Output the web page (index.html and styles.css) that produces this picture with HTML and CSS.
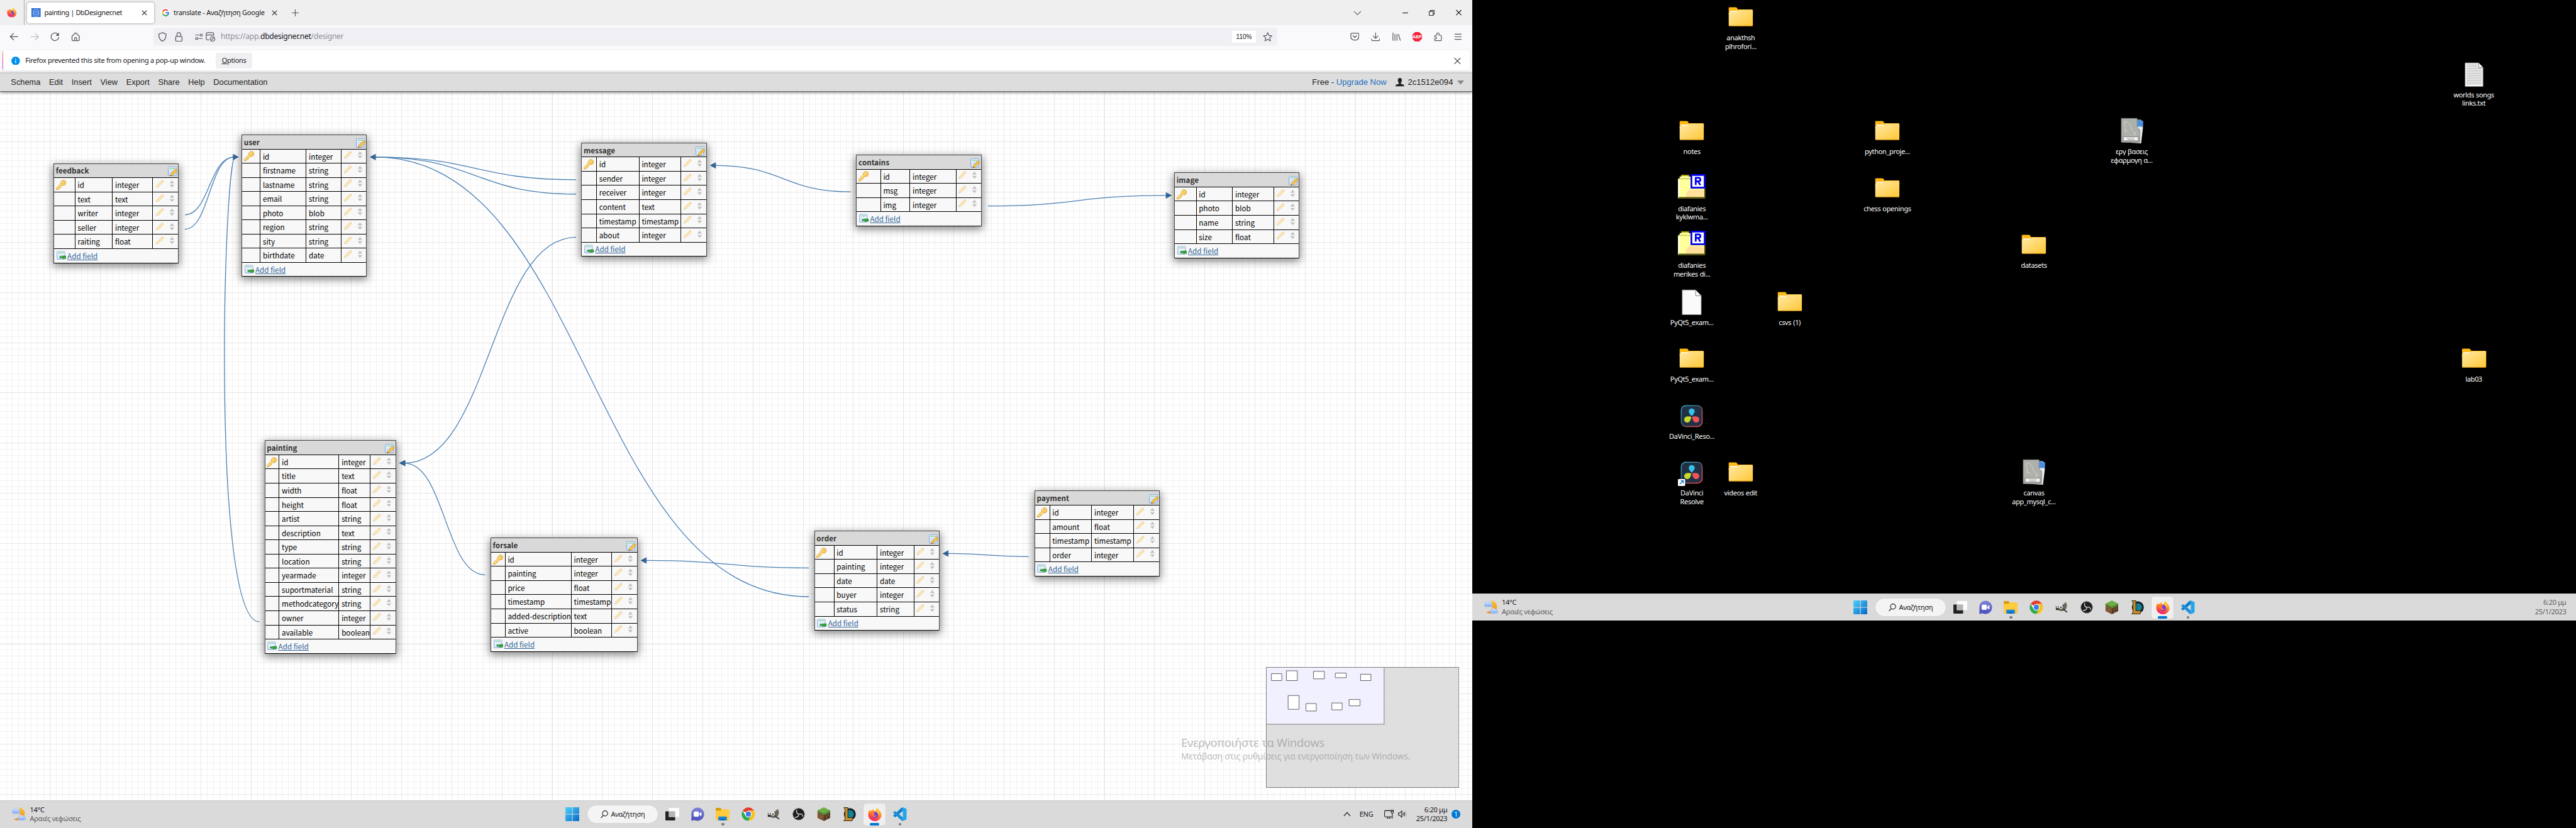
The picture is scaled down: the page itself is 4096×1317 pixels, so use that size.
FILE: index.html
```html
<!DOCTYPE html>
<html lang="el">
<head>
<meta charset="utf-8">
<title>painting | DbDesigner.net</title>
<link rel="stylesheet" href="styles.css">
</head>
<body>
<svg class="defs" width="0" height="0">
  <defs>
    <linearGradient id="gFolder" x1="0" y1="0" x2="1" y2="1"><stop offset="0" stop-color="#ffe9a6"/><stop offset="1" stop-color="#ffc734"/></linearGradient>
    <linearGradient id="gWin" x1="0" y1="0" x2="1" y2="1"><stop offset="0" stop-color="#4fd0fb"/><stop offset="1" stop-color="#0467c8"/></linearGradient>
    <linearGradient id="gFox" x1=".7" y1="0" x2=".3" y2="1"><stop offset="0" stop-color="#ffe14a"/><stop offset=".45" stop-color="#ff8a1f"/><stop offset=".8" stop-color="#ff3b47"/><stop offset="1" stop-color="#e31587"/></linearGradient>
    <linearGradient id="gChat" x1="0" y1="0" x2="0" y2="1"><stop offset="0" stop-color="#7f83d8"/><stop offset="1" stop-color="#4a4fbe"/></linearGradient>
    <linearGradient id="gMoon" x1="0" y1="0" x2="0" y2="1"><stop offset="0" stop-color="#ffc22e"/><stop offset="1" stop-color="#f08a16"/></linearGradient>
    <linearGradient id="gCloud" x1="0" y1="0" x2="0" y2="1"><stop offset="0" stop-color="#dbe9ff"/><stop offset="1" stop-color="#7faaf0"/></linearGradient>
    <linearGradient id="gDvEdge" x1="0" y1="0" x2="1" y2="1"><stop offset="0" stop-color="#2fb6d6"/><stop offset=".45" stop-color="#3a6d7c"/><stop offset=".6" stop-color="#a05a6a"/><stop offset="1" stop-color="#ff4b4b"/></linearGradient>
    <linearGradient id="gKey" x1="0" y1="0" x2="1" y2="1"><stop offset="0" stop-color="#fff3a0"/><stop offset="1" stop-color="#f5b92b"/></linearGradient>
    <linearGradient id="gSheet" x1="0" y1="0" x2="0" y2="1"><stop offset="0" stop-color="#e8f3fd"/><stop offset="1" stop-color="#b9d6f4"/></linearGradient>

    <symbol id="key" viewBox="0 0 18 18"><path d="M9.3 2.6 C10.8 .6 13.4 .2 15.2 1.4 C17.4 2.9 17.9 5.800 16.300 7.900 C15 9.600 12.600 10.100 10.800 9.200 L8.500 11.500 L8.300 13 L6.600 13.400 L6.400 14.900 L4.700 15.300 L3.600 17 L.8 17.200 L.7 14.500 L8.200 6.700 C7.900 5.200 8.300 3.900 9.300 2.600Z" fill="url(#gKey)" stroke="#dc9526" stroke-width="1"/><path d="M1.700 15.200 L8.800 7.900" stroke="#fff6c0" stroke-width="1"/><circle cx="13.200" cy="4.800" r="1.500" fill="#fff" stroke="#dc9526" stroke-width=".8"/></symbol>
    <symbol id="pencil" viewBox="0 0 14 14"><path d="M.6 13.400 L1.500 9.600 L9.900 1.200 Q11.200 .2 12.500 1.300 Q13.700 2.600 12.800 4 L4.400 12.300Z" fill="#fbdc8d" stroke="#edb95c" stroke-width=".9"/><path d="M9.900 1.200 Q11.200 .2 12.500 1.300 Q13.700 2.600 12.800 4Z" fill="#f4b79a"/><path d="M.5 13.500 L1.500 9.800 L4.300 12.400Z" fill="#f0d2ae"/><path d="M.5 13.500 L.9 12 L2 13Z" fill="#777"/></symbol>
    <symbol id="tools" viewBox="0 0 34 14"><g opacity=".62"><use href="#pencil" width="14" height="14"/></g><path d="M27.800 .8 L31.800 5.900 H23.800Z M27.800 13.500 L31.800 8.600 H23.800Z" fill="#c0c0c0"/></symbol>
    <symbol id="edit" viewBox="0 0 17 17"><rect x=".6" y=".6" width="14" height="15" rx=".8" fill="url(#gSheet)" stroke="#7fa8e0"/><path d="M2.500 3.400 H13" stroke="#8fce82" stroke-width="1.200"/><rect x="2.600" y="5.600" width="10.200" height="8.400" fill="#fff"/><path d="M2.600 7.600 H12.800 M2.600 9.800 H12.800 M2.600 12 H12.800 M5.200 5.600 V14 M7.800 5.600 V14 M10.400 5.600 V14" stroke="#a9cbea" stroke-width=".8"/><path d="M4.200 16.300 L5 12.600 L12.500 5 Q13.800 4.200 15 5.200 Q16.400 6.400 15.600 7.800 L8 15.400Z" fill="#fbc646" stroke="#b9741c" stroke-width=".8"/><path d="M4.200 16.300 L4.700 14.300 L6.200 15.800Z" fill="#444"/></symbol>
    <symbol id="addf" viewBox="0 0 17 15"><rect x=".6" y=".6" width="13.800" height="13.600" rx=".8" fill="url(#gSheet)" stroke="#8fb3e4"/><path d="M2.500 3 H12.500" stroke="#8fce82" stroke-width="1.200"/><rect x="2.400" y="5" width="10" height="7.400" fill="#f4f9ff"/><path d="M2.400 8.500 H12.400 M5 5 V12.400 M8 5 V12.400" stroke="#b7d1ee" stroke-width=".7"/><rect x="9" y="8.300" width="7.600" height="4.500" rx=".8" fill="#35a33c" stroke="#1f7f28" stroke-width=".6"/><path d="M4.200 10.500 L7.400 7.800 V9.700 H9 V11.400 H7.400 V13.200Z" fill="#2d8f36"/></symbol>

    <symbol id="x" viewBox="0 0 10 10"><path d="M1 1 L9 9 M9 1 L1 9" stroke="currentColor" stroke-width="1.100" fill="none"/></symbol>
    <symbol id="fox" viewBox="0 0 24 24"><path d="M12.500 24 C5 24 .6 18.600 .6 12.600 C.6 9 1.800 6.400 3.400 4.600 L4 7 C4.900 6 6 5.600 7.200 5.600 C7.800 4.200 8.800 3.300 9.800 2.800 C9.700 4.200 10.300 5.200 11.600 6.200 L13.800 6.800 C13.800 4 15 1.400 17 0 C17 2.600 18.600 4.200 20.600 6.200 C22.700 8.400 23.600 10.600 23.600 13.200 C23.600 19.400 18.800 24 12.500 24Z" fill="url(#gFox)"/><circle cx="12.500" cy="13.200" r="5.600" fill="#7b3be0"/><path d="M6.600 9.400 C8.600 8.600 11 9 12.600 10.400 C11.200 10.600 10.600 11.400 10.400 12.600 C10.800 14.600 13.400 15.400 15.400 14 C14.800 16.600 12 17.600 9.800 16.600 C7.400 15.400 6.300 12.400 6.600 9.400Z" fill="#ff7b2a"/><path d="M14 8 C17 9 18.600 11.500 18.200 14.600 C20 11.600 19 8.400 16.600 7Z" fill="#ffd23e"/></symbol>
    <symbol id="folder" viewBox="0 0 48 48"><path d="M3 8.500 Q3 7 4.500 7 H15 Q16.500 7 17.200 8 L19 11 H43.500 Q45 11 45 12.500 V20 H3Z" fill="#ffb914"/><path d="M3 17.500 Q3 15.500 5 15.500 L18 15 L20.500 11.800 H43.500 Q45 11.800 45 13.300 V38.500 Q45 40 43.500 40 H4.500 Q3 40 3 38.500Z" fill="url(#gFolder)"/><path d="M5 13 H19 L17 15.300 H5Z" fill="#fff" opacity=".85"/><path d="M3.600 39.500 H44.400" stroke="#e89f17" stroke-width="1"/></symbol>
    <symbol id="rfolder" viewBox="0 0 48 48"><path d="M0 8 H3 V4 H6 V1 H19 V4 H22 V8 H47 V42 H0Z" fill="#ffff9c"/><path d="M6 1 H19 V3 H6Z" fill="#9a9a00"/><path d="M1 7 H47 V9 H1Z" fill="#cccc66"/><path d="M1 9 H3 V40 H1Z" fill="#fff"/><path d="M19 27 H47 V40 H14 V33Z" fill="#ffcf9c" opacity=".75"/><path d="M16 29 H46 M15 33 H46 M15 37 H46" stroke="#ffff9c" stroke-width="1" stroke-dasharray="2 2"/><path d="M1 40 H46 V8 H48 V42 H1Z" fill="#4c4c00"/><rect x="22" y="0" width="26" height="25" fill="#0000f5"/><rect x="25" y="3" width="20" height="19" fill="#fff"/><path d="M31 19 V6.500 H36 Q39 6.500 39 9.500 Q39 12.500 36 12.500 H32 M35 12.500 L39 19" fill="none" stroke="#0000f5" stroke-width="3"/></symbol>
    <symbol id="file" viewBox="0 0 48 48"><path d="M7.500 3.500 H31 L40.500 13.500 V46.500 H7.500Z" fill="#fafafa" stroke="#8d8d8d"/><path d="M31 3.500 V13.500 H40.500Z" fill="#fff" stroke="#777"/></symbol>
    <symbol id="txt" viewBox="0 0 48 48"><path d="M8.500 4.500 H32 L39.500 12.500 V45.500 H8.500Z" fill="#f8f8f8" stroke="#8d8d8d"/><path d="M32 4.500 V12.500 H39.500" fill="#fff" stroke="#777"/><path d="M11 8 H30 M11 11 H30 M11 14 H37 M11 17 H37 M11 20 H37 M11 23 H37 M11 26 H37 M11 29 H37 M11 32 H37 M11 35 H37 M11 38 H37 M11 41 H37" stroke="#a2a2a2" stroke-width="1"/></symbol>
    <symbol id="sql" viewBox="0 0 48 48"><path d="M30 5 H39 L43 8 V20 L40 46 L8 44Z" fill="#e9ebea"/><path d="M33 5 H39.500 V7 H43.500 L43 17 H33Z" fill="#4a90e2"/><path d="M5.500 2.500 H33 V17 Q34 21 37.500 22 V44 H5.500Z" fill="#aeb0ab" stroke="#7e807b"/><path d="M11 8 C16 8 21 12 22 18 C23 24 27 26 31 29 L27 30 L30 33 M11 8 C10 14 14 17 12 26 L15 24 L18 27" fill="none" stroke="#d6d8d3" stroke-width="1"/><rect x="9" y="34.500" width="26" height="7" fill="#f4f4f4" stroke="#7e807b"/><path d="M15 37 H29 M16 39.500 H28" stroke="#aaa" stroke-width="1.200"/></symbol>
    <symbol id="davinci" viewBox="0 0 48 48"><rect x="5.800" y="6.800" width="36.400" height="36.400" rx="8" fill="#233044" stroke="url(#gDvEdge)" stroke-width="1.600"/><path d="M24 25 C20 21 18.800 18.500 18.800 16.500 A5.200 4.800 0 0 1 29.200 16.500 C29.200 18.500 28 21 24 25Z" fill="#35c3e8"/><path d="M23.200 26.200 C22.500 31.500 21 34 19 35.200 A5.200 5.200 0 0 1 13 26.700 C15.500 25.300 18.500 25 23.200 26.200Z" fill="#c6da2c"/><path d="M24.800 26.200 C25.500 31.500 27 34 29 35.200 A5.200 5.200 0 0 0 35 26.700 C32.500 25.300 29.500 25 24.800 26.200Z" fill="#f4545a"/></symbol>
    <symbol id="shortcut" viewBox="0 0 48 48"><use href="#davinci" width="48" height="48"/><rect x="0" y="36" width="12.500" height="12" rx="1" fill="#fff"/><path d="M3.200 45 L9 39.200 M5 39 H9.200 V43.500" fill="none" stroke="#0b6cc4" stroke-width="1.500"/></symbol>

    <symbol id="weather" viewBox="0 0 26 24"><path d="M13 0 C23 3 25 9 22.500 15 C19.500 22 11 25 4 20.500 C10 20 14 17 15 12 C15.500 8 15 4 13 0Z" fill="url(#gMoon)"/><path d="M3.500 11 A3.400 3.400 0 0 1 3.500 4.500 A4.200 4.200 0 0 1 11.500 4 A3.500 3.500 0 0 1 12 11Z" fill="url(#gCloud)" stroke="#8fb0ec" stroke-width=".5"/><path d="M13.500 22.500 A3.400 3.400 0 0 1 13.500 16 A4.200 4.200 0 0 1 21 15.500 A3.500 3.500 0 0 1 21.500 22.500Z" fill="url(#gCloud)" stroke="#8fb0ec" stroke-width=".5"/></symbol>
    <symbol id="win" viewBox="0 0 24 24"><path d="M0 0 H11.400 V11.400 H0Z M12.600 0 H24 V11.400 H12.600Z M0 12.600 H11.400 V24 H0Z M12.600 12.600 H24 V24 H12.600Z" fill="url(#gWin)"/></symbol>
    <symbol id="taskview" viewBox="0 0 24 24"><rect x="0" y="7" width="17" height="16" rx="1" fill="#222"/><rect x="6" y="1" width="18" height="16" rx="1" fill="#fff" opacity=".93"/><rect x="6" y="7" width="11" height="10" fill="#b5b5b5"/></symbol>
    <symbol id="chat" viewBox="0 0 24 24"><path d="M12.500 .5 A11.500 11.500 0 1 1 7 22.300 L1.500 23.500 V12 A11 11 0 0 1 12.500 .5Z" fill="url(#gChat)"/><rect x="5.500" y="7.500" width="9" height="9" rx="2" fill="#fff"/><path d="M15.500 10.500 L19 8.200 V15.800 L15.500 13.500Z" fill="#fff"/></symbol>
    <symbol id="explorer" viewBox="0 0 24 24"><path d="M0 2.500 Q0 1 1.500 1 H8 L10.500 3.500 H22.500 Q24 3.500 24 5 V22 Q24 23 23 23 H1 Q0 23 0 22Z" fill="#ffcb3d"/><path d="M0 2.500 Q0 1 1.500 1 H8 L10.500 3.500 L8 6 H0Z" fill="#d99a14"/><path d="M4.500 23 V17.500 Q4.500 16 6 16 H18 Q19.500 16 19.500 17.500 V23Z" fill="#1a84d8"/><path d="M8.500 23 V20.500 H15.500 V23Z" fill="#0b5cab"/></symbol>
    <symbol id="chrome" viewBox="0 0 24 24"><circle cx="12" cy="12" r="11.600" fill="#fff"/><path d="M12 12 L2 6.100 A11.600 11.600 0 0 1 22 6.100 H12Z" fill="#e33b2e"/><path d="M22 6.100 A11.600 11.600 0 0 1 12 23.600 L17 14.900 L12 6.100Z" fill="#fbc116"/><path d="M12 23.600 A11.600 11.600 0 0 1 2 6.100 L7 14.900 L12 17 L17 14.900Z" fill="#2da94f"/><circle cx="12" cy="12" r="5.700" fill="#fff"/><circle cx="12" cy="12" r="4.500" fill="#3b7ded"/></symbol>
    <symbol id="gimp" viewBox="0 0 24 24"><path d="M2 9 L4 10.500 L6 8 L9 10 Q14 9 19 3 L21 6 Q22 13 18 17 Q12 20 6 17 Q1 15 2 9Z" fill="#6b665b"/><circle cx="6" cy="11" r="2.600" fill="#fff"/><circle cx="11" cy="11.500" r="3" fill="#fff"/><circle cx="6.300" cy="11.200" r="1.200" fill="#111"/><circle cx="11" cy="11.700" r="1.400" fill="#111"/><ellipse cx="4.500" cy="15" rx="2.800" ry="1.700" fill="#222"/><path d="M14 15 L22 20.500" stroke="#3a3a3a" stroke-width="2"/></symbol>
    <symbol id="obs" viewBox="0 0 24 24"><circle cx="12" cy="12" r="10" fill="#1d1d1f" stroke="#4b4b4d"/><path d="M9 4.500 C7 8 9 11.500 12.300 12 M12.300 12 C16 10.500 19 12.500 19 16 M12.300 12 C12 16 9 18.500 5.500 17" fill="none" stroke="#c9c9cb" stroke-width="1.600"/></symbol>
    <symbol id="craft" viewBox="0 0 24 24"><path d="M12 0 L23 5.500 L12 11 L1 5.500Z" fill="#6fae45"/><path d="M1 5.500 L12 11 V24 L1 18.500Z" fill="#7a5233"/><path d="M23 5.500 L12 11 V24 L23 18.500Z" fill="#573923"/><path d="M1 5.500 L12 11 L23 5.500 V8.500 L20 10 V12 L17 11.500 L14 14 L12 13 L9 13.500 V11 L5 11 L4 9 L1 9Z" fill="#4f8a32"/><path d="M3 13 H5 M7 16 H9 M4 18 H6 M15 16 H17 M19 14 H21 M16 20 H18" stroke="#a87a50" stroke-width="1.400"/></symbol>
    <symbol id="lol" viewBox="0 0 24 24"><circle cx="13.500" cy="12" r="9.500" fill="#0b2b3a" stroke="#111" stroke-width="1.600"/><circle cx="13.500" cy="12" r="7" fill="#158396"/><path d="M3 .5 H10 V18 H19 L17.500 23.500 H3 L5 21 V3.500Z" fill="#c8902c" stroke="#20180a" stroke-width="1"/></symbol>
    <symbol id="vs" viewBox="0 0 24 24"><path d="M17 0 L23.500 3 V21 L17 24Z" fill="#23a5ee"/><path d="M17 0 V6.500 L3.500 17.500 L0 14.800 L14 1.500Z" fill="#0f80cc"/><path d="M17 24 V17.500 L3.500 6.500 L0 9.200 L14 22.500Z" fill="#1a8fdc"/></symbol>
  </defs>
</svg>

<div class="desk">
  <div class="monitor monitor--main">
    <header class="tabs">
      <div class="tabs__view"><svg width="17" height="17"><use href="#fox"/></svg></div>
      <div class="tab tab--active">
        <svg width="16" height="16" viewBox="0 0 16 16"><rect width="16" height="16" fill="#2f6fd0"/><g fill="none" stroke="#a9cbfa" stroke-width="1"><ellipse cx="8" cy="4" rx="4.800" ry="1.700"/><path d="M3.200 4 V12 C3.200 14.500 12.800 14.500 12.800 12 V4 M3.200 6.700 C3.200 9 12.800 9 12.800 6.700 M3.200 9.400 C3.200 11.700 12.800 11.700 12.800 9.400"/></g></svg>
        <span class="tab__title">painting | DbDesigner.net</span>
        <svg class="tab__close" width="10" height="10"><use href="#x"/></svg>
      </div>
      <div class="tab">
        <svg class="tab__google" width="16" height="16" viewBox="0 0 16 16"><circle cx="8" cy="8" r="8" fill="#fff"/><g fill="none" stroke-width="2.300"><path d="M11.800 4.300 A5.200 5.200 0 0 0 3.400 5.600" stroke="#ea4335"/><path d="M3.400 5.600 A5.200 5.200 0 0 0 3.400 10.400" stroke="#fbbc05"/><path d="M3.400 10.400 A5.200 5.200 0 0 0 11.500 11.900" stroke="#34a853"/><path d="M11.500 11.900 Q13.200 10.400 13.200 8.100 H8" stroke="#4285f4"/></g></svg>
        <span class="tab__title tab__title--g">translate - Αναζήτηση Google</span>
        <svg class="tab__close" width="10" height="10"><use href="#x"/></svg>
      </div>
      <svg class="tabs__new" width="12" height="12" viewBox="0 0 12 12"><path d="M6 0 V12 M0 6 H12" stroke="#555" stroke-width="1.200"/></svg>
      <div class="winctl">
        <svg class="winctl__list" width="14" height="10" viewBox="0 0 14 10"><path d="M1 2 L7 8 L13 2" fill="none" stroke="#666" stroke-width="1.300"/></svg>
        <svg width="10" height="10" viewBox="0 0 10 10"><path d="M0 5 H10" stroke="#000" stroke-width="1.100"/></svg>
        <svg width="10" height="10" viewBox="0 0 10 10"><path d="M.5 2.500 H7.500 V9.500 H.5Z M2.500 2.500 V.5 H9.500 V7.500 H7.500" fill="none" stroke="#000"/></svg>
        <svg width="12" height="11"><use href="#x"/></svg>
      </div>
    </header>

    <div class="nav">
      <div class="nav__btns">
        <svg width="16" height="16" viewBox="0 0 16 16"><path d="M15 8 H1.500 M7.500 2 L1.500 8 L7.500 14" fill="none" stroke="#56565f" stroke-width="1.400"/></svg>
        <svg width="16" height="16" viewBox="0 0 16 16"><path d="M1 8 H14.500 M8.500 2 L14.500 8 L8.500 14" fill="none" stroke="#bdbdc3" stroke-width="1.400"/></svg>
        <svg width="16" height="16" viewBox="0 0 16 16"><path d="M13.500 4.500 A6.600 6.600 0 1 0 14.600 8.500" fill="none" stroke="#56565f" stroke-width="1.400"/><path d="M15 .8 V6.500 H9.300Z" fill="#56565f"/></svg>
        <svg width="16" height="16" viewBox="0 0 16 16"><path d="M1.700 7.200 L8 1.200 L14.300 7.200 V13.500 Q14.300 15 12.800 15 H3.200 Q1.700 15 1.700 13.500Z M6.200 15 V10.800 Q6.200 9.500 8 9.500 Q9.800 9.500 9.800 10.800 V15" fill="none" stroke="#56565f" stroke-width="1.400"/></svg>
      </div>
      <div class="url">
        <svg width="16" height="17" viewBox="0 0 16 17"><path d="M8 1 L14.300 3.500 Q14.500 12.500 8 16 Q1.500 12.500 1.700 3.500Z" fill="none" stroke="#56565f" stroke-width="1.400"/></svg>
        <svg class="url__lock" width="14" height="17" viewBox="0 0 14 17"><rect x="1.500" y="7.500" width="11" height="8.500" rx="1.500" fill="none" stroke="#56565f" stroke-width="1.400"/><path d="M3.700 7.500 V4.500 Q3.700 1 7 1 Q10.300 1 10.300 4.500 V7.500" fill="none" stroke="#56565f" stroke-width="1.400"/></svg>
        <svg class="url__perm" width="14" height="12" viewBox="0 0 14 12"><g fill="none" stroke="#56565f" stroke-width="1.300"><path d="M.5 3 H8 M6 9 H13.500"/><circle cx="11" cy="3" r="1.900"/><circle cx="3" cy="9" r="1.900"/></g></svg>
        <svg width="17" height="17" viewBox="0 0 17 17"><g fill="none" stroke="#56565f" stroke-width="1.300"><path d="M6 13.500 H3 Q1 13.500 1 11.500 V3 Q1 1 3 1 H12 Q14 1 14 3 V6 M1 5 H14"/><circle cx="12" cy="12" r="4"/><path d="M9.300 14.700 L14.700 9.300"/></g></svg>
        <span class="url__text">https://app.<b>dbdesigner.net</b>/designer</span>
        <span class="url__zoom">110%</span>
        <svg width="17" height="17" viewBox="0 0 17 17"><path d="M8.500 1.200 L10.700 5.900 L15.900 6.500 L12 10 L13.100 15.300 L8.500 12.600 L3.900 15.300 L5 10 L1.100 6.500 L6.300 5.900Z" fill="none" stroke="#56565f" stroke-width="1.300"/></svg>
      </div>
      <div class="nav__ext">
        <svg width="16" height="16" viewBox="0 0 16 16"><path d="M2.500 2 H13.500 Q15 2 15 3.500 V7 Q15 14 8 14 Q1 14 1 7 V3.500 Q1 2 2.500 2Z M4.500 6 L8 9.300 L11.500 6" fill="none" stroke="#56565f" stroke-width="1.400"/></svg>
        <svg width="16" height="16" viewBox="0 0 16 16"><path d="M8 .8 V11 M3.500 6.500 L8 11 L12.500 6.500 M1.200 11.500 V13.500 Q1.200 15 2.700 15 H13.300 Q14.800 15 14.800 13.500 V11.500" fill="none" stroke="#56565f" stroke-width="1.300"/></svg>
        <svg width="16" height="16" viewBox="0 0 16 16"><path d="M2 1 V15 M5.500 3.500 V15 M9 3.500 V15 M11.500 3.500 L15 15" fill="none" stroke="#56565f" stroke-width="1.300"/></svg>
        <span class="abp">ABP</span>
        <svg width="16" height="16" viewBox="0 0 16 16"><path d="M4 5.500 H6.300 V3.300 A1.900 1.900 0 0 1 10.100 3.300 V5.500 H13 Q14 5.500 14 6.500 V14 Q14 15 13 15 H3.500 Q2.500 15 2.500 14 V12 H4 A1.700 1.700 0 0 0 4 8.600 H2.500 V6.500 Q2.500 5.500 4 5.500Z" fill="none" stroke="#56565f" stroke-width="1.300"/></svg>
        <svg width="14" height="12" viewBox="0 0 14 12"><path d="M1 1.500 H13 M1 6 H13 M1 10.500 H13" stroke="#56565f" stroke-width="1.200"/></svg>
      </div>
    </div>

    <div class="notice">
      <svg width="15" height="15" viewBox="0 0 15 15"><circle cx="7.500" cy="7.500" r="7.500" fill="#0090ed"/><path d="M7.500 6.300 V11.300 M7.500 3.400 V4.900" stroke="#fff" stroke-width="1.400"/></svg>
      <span class="notice__text">Firefox prevented this site from opening a pop-up window.</span>
      <span class="notice__btn"><u>O</u>ptions</span>
      <svg class="notice__close" width="14" height="13"><use href="#x"/></svg>
    </div>

    <div class="menubar">
      <span>Schema</span><span>Edit</span><span>Insert</span><span>View</span><span>Export</span><span>Share</span><span>Help</span><span>Documentation</span>
      <span class="menubar__plan">Free - <a>Upgrade Now</a></span>
      <svg class="menubar__user" width="15" height="15" viewBox="0 0 15 15"><path d="M7.500 0 Q11 0 11 4 Q11 7 9.300 8.600 V10 L14 11.800 Q15 12.300 15 14.500 H0 Q0 12.300 1 11.800 L5.700 10 V8.600 Q4 7 4 4 Q4 0 7.500 0Z" fill="#222"/></svg>
      <span class="menubar__id">2c1512e094</span>
      <svg class="menubar__arrow" width="12" height="7" viewBox="0 0 12 7"><path d="M0 0 H12 L6 7Z" fill="#888"/></svg>
    </div>

    <main class="canvas">
      <svg class="canvas__layer" viewBox="0 160 2560 1232" width="2560" height="1232" fill="none">
        <g shape-rendering="crispEdges">
          <path d="M10.400 776 H2560" stroke="#f2f2f2" stroke-width="1232" stroke-dasharray="1.090 9.822"/>
          <path d="M1280 170.400 V1392" stroke="#f2f2f2" stroke-width="2560" stroke-dasharray="1.090 9.822"/>
          <path d="M86.800 776 H2560" stroke="#e6e6e6" stroke-width="1232" stroke-dasharray="1.090 86.210"/>
          <path d="M1280 246.800 V1392" stroke="#e6e6e6" stroke-width="2560" stroke-dasharray="1.090 86.210"/>
        </g>
        <g stroke="#4a80b3" stroke-width="1.400">
          <path d="M321.600 374 C364 374 364 273.600 407 273.600"/>
          <path d="M321.600 399 C364 399 364 273.600 407 273.600"/>
          <path d="M451 1082 C366 1082 389 273.600 409 273.600"/>
          <path d="M1002 313 C827 313 827 273.600 652 273.600"/>
          <path d="M1002 338 C827 338 827 273.600 652 273.600"/>
          <path d="M1406.500 1038.300 C1025 1038.300 1025 273.600 652 273.600"/>
          <path d="M1002 413 C853 413 853 806 703 806"/>
          <path d="M843.600 1000.300 C774 1000.300 774 806 703 806"/>
          <path d="M1479.800 334 C1362 334 1362 288 1243 288"/>
          <path d="M1718.300 358.700 C1873 358.700 1873 340.300 2028 340.300"/>
          <path d="M1406.500 988.300 C1265 988.300 1265 975.300 1123 975.300"/>
          <path d="M1789 968.700 C1719 968.700 1719 963.300 1648 963.300"/>
        </g>
        <path fill="#336699" d="M415.500 273.600 L405 268 V279.200Z M643 273.600 L653.500 268 V279.200Z M1234.500 288 L1245 282.400 V293.600Z M2038 340.300 L2027.500 334.700 V345.900Z M693.700 806 L705 800.400 V811.600Z M1114 975.300 L1124.500 969.700 V980.900Z M1639 963.300 L1649.500 957.700 V968.900Z"/>
      </svg>

      <section class="node node--feedback">
        <h2>feedback<svg><use href="#edit"/></svg></h2>
        <div class="row"><i><svg><use href="#key"/></svg></i><span>id</span><span>integer</span><em><svg><use href="#tools"/></svg></em></div>
        <div class="row"><i></i><span>text</span><span>text</span><em><svg><use href="#tools"/></svg></em></div>
        <div class="row"><i></i><span>writer</span><span>integer</span><em><svg><use href="#tools"/></svg></em></div>
        <div class="row"><i></i><span>seller</span><span>integer</span><em><svg><use href="#tools"/></svg></em></div>
        <div class="row"><i></i><span>raiting</span><span>float</span><em><svg><use href="#tools"/></svg></em></div>
        <div class="add"><svg><use href="#addf"/></svg><a>Add field</a></div>
      </section>

      <section class="node node--user">
        <h2>user<svg><use href="#edit"/></svg></h2>
        <div class="row"><i><svg><use href="#key"/></svg></i><span>id</span><span>integer</span><em><svg><use href="#tools"/></svg></em></div>
        <div class="row"><i></i><span>firstname</span><span>string</span><em><svg><use href="#tools"/></svg></em></div>
        <div class="row"><i></i><span>lastname</span><span>string</span><em><svg><use href="#tools"/></svg></em></div>
        <div class="row"><i></i><span>email</span><span>string</span><em><svg><use href="#tools"/></svg></em></div>
        <div class="row"><i></i><span>photo</span><span>blob</span><em><svg><use href="#tools"/></svg></em></div>
        <div class="row"><i></i><span>region</span><span>string</span><em><svg><use href="#tools"/></svg></em></div>
        <div class="row"><i></i><span>sity</span><span>string</span><em><svg><use href="#tools"/></svg></em></div>
        <div class="row"><i></i><span>birthdate</span><span>date</span><em><svg><use href="#tools"/></svg></em></div>
        <div class="add"><svg><use href="#addf"/></svg><a>Add field</a></div>
      </section>

      <section class="node node--message">
        <h2>message<svg><use href="#edit"/></svg></h2>
        <div class="row"><i><svg><use href="#key"/></svg></i><span>id</span><span>integer</span><em><svg><use href="#tools"/></svg></em></div>
        <div class="row"><i></i><span>sender</span><span>integer</span><em><svg><use href="#tools"/></svg></em></div>
        <div class="row"><i></i><span>receiver</span><span>integer</span><em><svg><use href="#tools"/></svg></em></div>
        <div class="row"><i></i><span>content</span><span>text</span><em><svg><use href="#tools"/></svg></em></div>
        <div class="row"><i></i><span>timestamp</span><span>timestamp</span><em><svg><use href="#tools"/></svg></em></div>
        <div class="row"><i></i><span>about</span><span>integer</span><em><svg><use href="#tools"/></svg></em></div>
        <div class="add"><svg><use href="#addf"/></svg><a>Add field</a></div>
      </section>

      <section class="node node--contains">
        <h2>contains<svg><use href="#edit"/></svg></h2>
        <div class="row"><i><svg><use href="#key"/></svg></i><span>id</span><span>integer</span><em><svg><use href="#tools"/></svg></em></div>
        <div class="row"><i></i><span>msg</span><span>integer</span><em><svg><use href="#tools"/></svg></em></div>
        <div class="row"><i></i><span>img</span><span>integer</span><em><svg><use href="#tools"/></svg></em></div>
        <div class="add"><svg><use href="#addf"/></svg><a>Add field</a></div>
      </section>

      <section class="node node--image">
        <h2>image<svg><use href="#edit"/></svg></h2>
        <div class="row"><i><svg><use href="#key"/></svg></i><span>id</span><span>integer</span><em><svg><use href="#tools"/></svg></em></div>
        <div class="row"><i></i><span>photo</span><span>blob</span><em><svg><use href="#tools"/></svg></em></div>
        <div class="row"><i></i><span>name</span><span>string</span><em><svg><use href="#tools"/></svg></em></div>
        <div class="row"><i></i><span>size</span><span>float</span><em><svg><use href="#tools"/></svg></em></div>
        <div class="add"><svg><use href="#addf"/></svg><a>Add field</a></div>
      </section>

      <section class="node node--painting">
        <h2>painting<svg><use href="#edit"/></svg></h2>
        <div class="row"><i><svg><use href="#key"/></svg></i><span>id</span><span>integer</span><em><svg><use href="#tools"/></svg></em></div>
        <div class="row"><i></i><span>title</span><span>text</span><em><svg><use href="#tools"/></svg></em></div>
        <div class="row"><i></i><span>width</span><span>float</span><em><svg><use href="#tools"/></svg></em></div>
        <div class="row"><i></i><span>height</span><span>float</span><em><svg><use href="#tools"/></svg></em></div>
        <div class="row"><i></i><span>artist</span><span>string</span><em><svg><use href="#tools"/></svg></em></div>
        <div class="row"><i></i><span>description</span><span>text</span><em><svg><use href="#tools"/></svg></em></div>
        <div class="row"><i></i><span>type</span><span>string</span><em><svg><use href="#tools"/></svg></em></div>
        <div class="row"><i></i><span>location</span><span>string</span><em><svg><use href="#tools"/></svg></em></div>
        <div class="row"><i></i><span>yearmade</span><span>integer</span><em><svg><use href="#tools"/></svg></em></div>
        <div class="row"><i></i><span>suportmaterial</span><span>string</span><em><svg><use href="#tools"/></svg></em></div>
        <div class="row"><i></i><span>methodcategory</span><span>string</span><em><svg><use href="#tools"/></svg></em></div>
        <div class="row"><i></i><span>owner</span><span>integer</span><em><svg><use href="#tools"/></svg></em></div>
        <div class="row"><i></i><span>available</span><span>boolean</span><em><svg><use href="#tools"/></svg></em></div>
        <div class="add"><svg><use href="#addf"/></svg><a>Add field</a></div>
      </section>

      <section class="node node--forsale">
        <h2>forsale<svg><use href="#edit"/></svg></h2>
        <div class="row"><i><svg><use href="#key"/></svg></i><span>id</span><span>integer</span><em><svg><use href="#tools"/></svg></em></div>
        <div class="row"><i></i><span>painting</span><span>integer</span><em><svg><use href="#tools"/></svg></em></div>
        <div class="row"><i></i><span>price</span><span>float</span><em><svg><use href="#tools"/></svg></em></div>
        <div class="row"><i></i><span>timestamp</span><span>timestamp</span><em><svg><use href="#tools"/></svg></em></div>
        <div class="row"><i></i><span>added-description</span><span>text</span><em><svg><use href="#tools"/></svg></em></div>
        <div class="row"><i></i><span>active</span><span>boolean</span><em><svg><use href="#tools"/></svg></em></div>
        <div class="add"><svg><use href="#addf"/></svg><a>Add field</a></div>
      </section>

      <section class="node node--order">
        <h2>order<svg><use href="#edit"/></svg></h2>
        <div class="row"><i><svg><use href="#key"/></svg></i><span>id</span><span>integer</span><em><svg><use href="#tools"/></svg></em></div>
        <div class="row"><i></i><span>painting</span><span>integer</span><em><svg><use href="#tools"/></svg></em></div>
        <div class="row"><i></i><span>date</span><span>date</span><em><svg><use href="#tools"/></svg></em></div>
        <div class="row"><i></i><span>buyer</span><span>integer</span><em><svg><use href="#tools"/></svg></em></div>
        <div class="row"><i></i><span>status</span><span>string</span><em><svg><use href="#tools"/></svg></em></div>
        <div class="add"><svg><use href="#addf"/></svg><a>Add field</a></div>
      </section>

      <section class="node node--payment">
        <h2>payment<svg><use href="#edit"/></svg></h2>
        <div class="row"><i><svg><use href="#key"/></svg></i><span>id</span><span>integer</span><em><svg><use href="#tools"/></svg></em></div>
        <div class="row"><i></i><span>amount</span><span>float</span><em><svg><use href="#tools"/></svg></em></div>
        <div class="row"><i></i><span>timestamp</span><span>timestamp</span><em><svg><use href="#tools"/></svg></em></div>
        <div class="row"><i></i><span>order</span><span>integer</span><em><svg><use href="#tools"/></svg></em></div>
        <div class="add"><svg><use href="#addf"/></svg><a>Add field</a></div>
      </section>

      <svg class="minimap" width="336" height="210" viewBox="2202 1160 336 210">
        <rect x="2202.500" y="1160.500" width="335" height="209" fill="#dcdcdc" fill-opacity=".9" stroke="#777"/>
        <rect x="2202.500" y="1160.500" width="205" height="99" fill="#f0f0ff" stroke="#777"/>
        <path fill="#fff" stroke="#555" d="M2211.500 1171.500h18v12h-18z M2237.500 1166.500h19v17h-19z M2284.500 1167.500h19v13h-19z M2322.500 1170.500h19v8h-19z M2366.500 1172.500h18v11h-18z M2240.500 1209.500h19v24h-19z M2271.500 1223.500h18v13h-18z M2316.500 1222.500h18v12h-18z M2346.500 1216.500h19v11h-19z"/>
      </svg>
      <div class="activate"><p class="activate__title">Ενεργοποιήστε τα Windows</p><p class="activate__text">Μετάβαση στις ρυθμίσεις για ενεργοποίηση των Windows.</p></div>
    </main>

    <footer class="taskbar">
      <div class="taskbar__left"><svg width="26" height="24"><use href="#weather"/></svg><div><p>14°C</p><p class="dim">Αραιές νεφώσεις</p></div></div>
      <div class="taskbar__apps">
        <span class="app"><svg><use href="#win"/></svg></span>
        <span class="search"><svg width="13" height="14" viewBox="0 0 13 14"><circle cx="7.800" cy="5.200" r="4.500" fill="none" stroke="#222" stroke-width="1.300"/><path d="M4.700 8.600 L.7 13" stroke="#222" stroke-width="1.500"/></svg>Αναζήτηση</span>
        <span class="app"><svg><use href="#taskview"/></svg></span>
        <span class="app"><svg><use href="#chat"/></svg></span>
        <span class="app app--open"><svg><use href="#explorer"/></svg></span>
        <span class="app"><svg><use href="#chrome"/></svg></span>
        <span class="app"><svg><use href="#gimp"/></svg></span>
        <span class="app"><svg><use href="#obs"/></svg></span>
        <span class="app"><svg><use href="#craft"/></svg></span>
        <span class="app"><svg><use href="#lol"/></svg></span>
        <span class="app app--active"><svg><use href="#fox"/></svg></span>
        <span class="app app--open"><svg><use href="#vs"/></svg></span>
      </div>
      <div class="taskbar__right">
        <svg class="tray-up" width="13" height="9" viewBox="0 0 13 9"><path d="M1 7.500 L6.500 1.500 L12 7.500" fill="none" stroke="#111" stroke-width="1.300"/></svg>
        <span class="tray-lang">ENG</span>
        <svg class="tray-net" width="17" height="16" viewBox="0 0 17 16"><path d="M11 1.500 H2 Q.7 1.500 .7 2.800 V11 Q.7 12.300 2 12.300 H14 M4 15.300 H12 M6 12.300 V15 M9.500 12.300 V15 M12 .7 H16 V4 Q16 6 14 6 Q12 6 12 4Z M12 2.500 H16 M14 6 V15.500" fill="none" stroke="#111" stroke-width="1.100"/></svg>
        <svg class="tray-vol" width="16" height="13" viewBox="0 0 16 13"><path d="M.7 4.500 H3 L6.500 1 V12 L3 8.500 H.7Z M8.500 4.500 Q9.700 6.500 8.500 8.500 M10.500 2.800 Q12.800 6.500 10.500 10.200" fill="none" stroke="#111" stroke-width="1.100"/><path d="M12.600 1.200 Q16 6.500 12.600 11.800" fill="none" stroke="#aaa"/></svg>
        <div class="clock"><p>6:20 μμ</p><p>25/1/2023</p></div>
        <span class="badge">1</span>
      </div>
    </footer>
  </div>

  <div class="monitor monitor--side">
    <div class="icons">
      <div class="item c6 r1"><svg><use href="#folder"/></svg><p>anakthsh<br>plhrofori...</p></div>
      <div class="item c21 r2"><svg><use href="#txt"/></svg><p>worlds songs<br>links.txt</p></div>
      <div class="item c5 r3"><svg><use href="#folder"/></svg><p>notes</p></div>
      <div class="item c9 r3"><svg><use href="#folder"/></svg><p>python_proje...</p></div>
      <div class="item c14 r3"><svg><use href="#sql"/></svg><p>εργ βασεις<br>εφαρμογη α...</p></div>
      <div class="item c5 r4"><svg><use href="#rfolder"/></svg><p>diafanies<br>kyklwma...</p></div>
      <div class="item c9 r4"><svg><use href="#folder"/></svg><p>chess openings</p></div>
      <div class="item c5 r5"><svg><use href="#rfolder"/></svg><p>diafanies<br>merikes di...</p></div>
      <div class="item c12 r5"><svg><use href="#folder"/></svg><p>datasets</p></div>
      <div class="item c5 r6"><svg><use href="#file"/></svg><p>PyQt5_exam...</p></div>
      <div class="item c7 r6"><svg><use href="#folder"/></svg><p>csvs (1)</p></div>
      <div class="item c5 r7"><svg><use href="#folder"/></svg><p>PyQt5_exam...</p></div>
      <div class="item c21 r7"><svg><use href="#folder"/></svg><p>lab03</p></div>
      <div class="item c5 r8"><svg><use href="#davinci"/></svg><p>DaVinci_Reso...</p></div>
      <div class="item c5 r9"><svg><use href="#shortcut"/></svg><p>DaVinci<br>Resolve</p></div>
      <div class="item c6 r9"><svg><use href="#folder"/></svg><p>videos edit</p></div>
      <div class="item c12 r9"><svg><use href="#sql"/></svg><p>canvas<br>app_mysql_c...</p></div>
    </div>
    <footer class="taskbar">
      <div class="taskbar__left"><svg width="26" height="24"><use href="#weather"/></svg><div><p>14°C</p><p class="dim">Αραιές νεφώσεις</p></div></div>
      <div class="taskbar__apps">
        <span class="app"><svg><use href="#win"/></svg></span>
        <span class="search"><svg width="13" height="14" viewBox="0 0 13 14"><circle cx="7.800" cy="5.200" r="4.500" fill="none" stroke="#222" stroke-width="1.300"/><path d="M4.700 8.600 L.7 13" stroke="#222" stroke-width="1.500"/></svg>Αναζήτηση</span>
        <span class="app"><svg><use href="#taskview"/></svg></span>
        <span class="app"><svg><use href="#chat"/></svg></span>
        <span class="app app--open"><svg><use href="#explorer"/></svg></span>
        <span class="app"><svg><use href="#chrome"/></svg></span>
        <span class="app"><svg><use href="#gimp"/></svg></span>
        <span class="app"><svg><use href="#obs"/></svg></span>
        <span class="app"><svg><use href="#craft"/></svg></span>
        <span class="app"><svg><use href="#lol"/></svg></span>
        <span class="app app--active"><svg><use href="#fox"/></svg></span>
        <span class="app app--open"><svg><use href="#vs"/></svg></span>
      </div>
      <div class="taskbar__right taskbar__right--side"><div class="clock dim"><p>6:20 μμ</p><p>25/1/2023</p></div></div>
    </footer>
  </div>
</div>
</body>
</html>
```
FILE: styles.css
```css
* { box-sizing: border-box; margin: 0; padding: 0; }
html { background: #000; overflow: hidden; }
body {
  width: 4096px;
  height: 1317px;
  background: #000;
  font: 12px/16px "Noto Sans", "Open Sans", sans-serif;
  color: #15141a;
  overflow: hidden;
  white-space: nowrap;
}
svg { display: block; flex: none; }
.defs { position: absolute; }

.desk { zoom: 0.9142857; display: grid; grid-template-columns: 2560px 1920px; align-items: start; width: 4480px; height: 1440px; }
.monitor { display: flex; flex-direction: column; overflow: hidden; }
.monitor--main { height: 1440px; background: #f9f9fb; }
.monitor--side { height: 1080px; }

/* Browser tab strip */
.tabs { display: flex; align-items: center; height: 44px; background: #efefef; }
.tabs__view { display: flex; align-items: center; width: 43px; height: 44px; padding-left: 12px; border-right: 1px solid #aaa; margin-right: 4px; }
.tab { display: flex; align-items: center; height: 36px; padding: 0 12px 0 8px; border-radius: 4px; color: #15141a; }
.tab--active { width: 221px; background: #fff; box-shadow: 0 0 4px rgba(0, 0, 0, .4); margin-right: 4px; }
.tab__title { margin-left: 6px; letter-spacing: -.45px; }
.tab__title--g { width: 158px; letter-spacing: -.25px; }
.tab__close { margin-left: auto; }
.tab:not(.tab--active) { width: 221px; }
.tab:not(.tab--active) .tab__close { margin-left: 12px; }
.tabs__new { margin-left: 15px; }
.winctl { display: flex; align-items: center; gap: 36px; margin-left: auto; padding-right: 17px; }
.winctl__list { margin-right: 35px; }

/* Navigation toolbar */
.nav { display: flex; align-items: center; height: 40px; padding-left: 16px; }
.nav__btns { display: flex; gap: 20px; width: 251px; }
.url { display: flex; align-items: center; width: 1954px; height: 32px; padding: 0 8px; background: #f0f0f4; border-radius: 4px; }
.url__lock { margin: 0 21px 0 13px; }
.url__perm { margin-right: 5px; }
.url__text { margin-left: 9px; font-size: 13.300px; letter-spacing: -.36px; color: #8f8f98; }
.url__text b { font-weight: 400; color: #15141a; }
.url__zoom { margin: 0 12px 0 auto; width: 41px; height: 21px; border-radius: 3px; background: #fff; font: 11px/21px "Liberation Sans", sans-serif; text-align: center; }
.nav__ext { display: flex; align-items: center; gap: 20px; margin-left: auto; padding-right: 17px; }
.abp { width: 17px; height: 17px; background: #f5243f; clip-path: polygon(30% 0, 70% 0, 100% 30%, 100% 70%, 70% 100%, 30% 100%, 0 70%, 0 30%); color: #fff; font: bold 7.500px/17px "Liberation Sans", sans-serif; text-align: center; }

.notice { display: flex; align-items: center; height: 35px; margin: 4px 4px; padding: 0 14px 0 16px; border-radius: 4px; background: linear-gradient(#ffb14a, #ff4aa2, #a259ff) left / 1.500px 100% no-repeat #fff; box-shadow: 0 0 2px rgba(0, 0, 0, .15); }
.notice__text { margin-left: 9px; width: 331px; letter-spacing: -.28px; }
.notice__btn { width: 64px; height: 27px; border-radius: 3px; background: #f0f0f2; line-height: 27px; text-align: center; letter-spacing: -.3px; }
.notice__close { margin-left: auto; color: #56565f; }

/* Designer menu bar */
.menubar { position: relative; z-index: 2; display: flex; align-items: center; gap: 15px; height: 33px; padding: 0 14px 0 19px; background: #ddd; border-top: 1px solid #ccc; border-bottom: 1px solid #666; box-shadow: 0 1px 5px rgba(0, 0, 0, .6); font: 14px/16px "Liberation Sans", Arial, sans-serif; color: #222; }
.menubar__plan { margin-left: auto; font-size: 14.300px; }
.menubar__plan a { color: #1a6fbd; }
.menubar__user { margin-left: 1px; }
.menubar__id { margin-left: -9px; font-size: 14.300px; }
.menubar__arrow { margin-left: -8px; }

/* Diagram canvas */
.canvas { position: relative; flex: 1; background: #fff; overflow: hidden; }
.canvas__layer { position: absolute; left: 0; top: 0; }
.node { position: absolute; display: flex; flex-direction: column; border: 1px solid #444; border-bottom-color: #000; background: #f8f8f8; box-shadow: 0 4px 14px 1px rgba(0, 0, 0, .5); font: 12.800px/24px "Noto Sans CJK SC", "Noto Sans", sans-serif; color: #000; }
.node h2 { display: flex; align-items: center; justify-content: space-between; height: 23.670px; padding: 0 1px 0 3px; background: #d9d9d9; font-size: 12.800px; font-weight: 700; color: #333; }
.node h2 svg { width: 17px; height: 17px; margin-top: 4px; }
.row { display: grid; grid-template-columns: var(--cols); height: 24.670px; border-top: 1px solid #000; }
.row > * { border-right: 1px solid #000; padding-left: 4px; overflow: hidden; }
.row i svg { width: 18px; height: 18px; margin: 3px 0 0 -1px; }
.row em { display: flex; justify-content: flex-end; border: 0; padding: 3px 5px 0 0; }
.row em svg { width: 34px; height: 14px; }
.add { display: flex; align-items: center; height: 24.670px; padding-left: 4px; border-top: 1px solid #000; }
.add svg { width: 17px; height: 16px; margin-bottom: 1px; }
.add a { margin-left: 2px; color: #336699; text-decoration: underline; text-underline-offset: 1px; }
.node--feedback { left: 93px; top: 124px; width: 218px; --cols: 37px 65px 70px 1fr; }
.node--user { left: 420px; top: 74px; width: 218px; --cols: 32px 80px 61px 1fr; }
.node--message { left: 1011px; top: 88px; width: 218px; --cols: 26px 74px 73px 1fr; }
.node--contains { left: 1489px; top: 109px; width: 218px; --cols: 42px 51px 80px 1fr; }
.node--image { left: 2042px; top: 140px; width: 218px; --cols: 38px 63px 72px 1fr; }
.node--painting { left: 460px; top: 606px; width: 229px; --cols: 25px 104px 54px 1fr; }
.node--forsale { left: 853px; top: 775.400px; width: 256px; --cols: 25px 115px 70px 1fr; }
.node--order { left: 1416px; top: 763.400px; width: 218px; --cols: 34px 75px 64px 1fr; }
.node--payment { left: 1799px; top: 693.600px; width: 218px; --cols: 26px 73px 73px 1fr; }
.minimap { position: absolute; left: 2202px; top: 1000px; }
.activate { position: absolute; left: 2054px; top: 1118px; color: rgba(140, 140, 140, .6); }
.activate__title { font-size: 20px; line-height: 28px; letter-spacing: -.3px; }
.activate__text { font-size: 15px; line-height: 19px; letter-spacing: -.2px; }

/* Windows taskbar */
.taskbar { display: grid; grid-template-columns: 1fr auto 1fr; align-items: center; height: 48px; flex: none; background: #dadada; border-top: 1px solid #c8c8c8; letter-spacing: -.3px; }
.dim { color: #5c5c5c; }
.taskbar__left { display: flex; align-items: center; gap: 6px; padding-left: 20px; }
.taskbar__apps { display: flex; align-items: center; }
.app { position: relative; display: flex; align-items: center; justify-content: center; width: 44px; height: 47px; }
.app svg { width: 24px; height: 24px; z-index: 1; }
.app--active::before { content: ""; position: absolute; inset: 5px 3px 4px; border-radius: 4px; background: #efefef; box-shadow: 0 0 1px #999; }
.app::after { position: absolute; bottom: 4px; height: 4px; border-radius: 2px; }
.app--open::after { content: ""; width: 5px; background: #7d7d7d; }
.app--active::after { content: ""; width: 16px; background: #0078d4; }
.search { display: flex; align-items: center; justify-content: center; gap: 5px; width: 122px; height: 31px; margin: 0 3px 0 5px; border-radius: 16px; background: #f4f4f4; box-shadow: 0 0 1px #aaa; }
.taskbar__right { display: flex; align-items: center; justify-content: flex-end; padding-right: 20px; }
.taskbar__right--side { padding-right: 17px; }
.tray-lang { margin: 0 19px 0 15px; }
.tray-net { margin-right: 7px; }
.clock { width: 70px; text-align: right; }
.badge { width: 16px; height: 16px; margin-left: 7px; border-radius: 50%; background: #0078d4; color: #fff; font-size: 11px; text-align: center; }

/* Desktop icon grid */
.icons { display: grid; grid-template-columns: repeat(22, 85px); grid-template-rows: repeat(10, 99px); height: 1032px; background: #000; }
.item { display: flex; flex-direction: column; align-items: center; padding-top: 6px; color: #fff; }
.item svg { width: 48px; height: 48px; }
.item p { margin-top: 4px; line-height: 15px; text-align: center; letter-spacing: -.35px; word-spacing: .4px; }
.c5 { grid-column: 5; } .c6 { grid-column: 6; } .c7 { grid-column: 7; } .c9 { grid-column: 9; }
.c12 { grid-column: 12; } .c14 { grid-column: 14; } .c21 { grid-column: 21; }
.r1 { grid-row: 1; } .r2 { grid-row: 2; } .r3 { grid-row: 3; } .r4 { grid-row: 4; } .r5 { grid-row: 5; }
.r6 { grid-row: 6; } .r7 { grid-row: 7; } .r8 { grid-row: 8; } .r9 { grid-row: 9; }
```
